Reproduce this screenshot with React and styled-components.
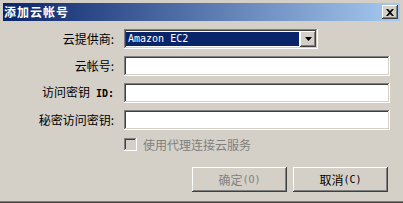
import React from "react";
import styled, { createGlobalStyle } from "styled-components";

const Global = createGlobalStyle`
  html, body { margin: 0; padding: 0; background: #d4d0c8; }
  * { box-sizing: border-box; }
`;

const raised = `
  box-shadow: inset -1px -1px #404040, inset 1px 1px #ffffff,
    inset -2px -2px #808080, inset 2px 2px #d4d0c8;
`;
const sunken = `
  box-shadow: inset -1px -1px #ffffff, inset 1px 1px #808080,
    inset -2px -2px #d4d0c8, inset 2px 2px #404040;
`;

const Window = styled.div`
  width: 403px;
  height: 203px;
  background: #d4d0c8;
  padding: 3px 3px 0 3px;
  box-shadow: inset 0 -1px #404040, inset 0 -2px #808080;
  font-family: "Noto Sans CJK SC", "Liberation Sans", sans-serif;
  font-size: 12px;
  color: #000;
`;

const TitleBar = styled.div`
  height: 18px;
  display: flex;
  align-items: center;
  justify-content: space-between;
  padding: 0 2px 0 1px;
  background: linear-gradient(to right, #0a246a, #a6caf0);
`;

const Title = styled.span`
  color: #fff;
  font-weight: bold;
  font-size: 12px;
  letter-spacing: 1px;
  line-height: 18px;
`;

const CloseButton = styled.div`
  width: 16px;
  height: 14px;
  background: #d4d0c8;
  ${raised}
  display: flex;
  align-items: center;
  justify-content: center;
`;

const Form = styled.div`
  display: grid;
  grid-template-columns: 111px 266px;
  grid-auto-rows: 20px;
  column-gap: 10px;
  row-gap: 7px;
  margin-top: 8px;
`;

const Label = styled.label`
  text-align: right;
  align-self: center;
  line-height: 14px;
  white-space: nowrap;
`;

const Mono = styled.span`
  font-family: "DejaVu Sans Mono", "Liberation Mono", monospace;
  font-size: 10px;
  font-weight: ${(p) => (p.bold ? "bold" : "normal")};
`;

const Field = styled.div`
  background: #fff;
  ${sunken}
  height: 20px;
`;

const SelectBox = styled.div`
  width: 194px;
  height: 20px;
  background: #fff;
  ${sunken}
  padding: 2px;
  display: flex;
  align-items: stretch;
`;

const Selected = styled.div`
  flex: 1;
  margin: 1px 1px 1px 0;
  background: #0a246a;
  color: #fff;
  font-family: "DejaVu Sans Mono", "Liberation Mono", monospace;
  font-size: 10px;
  line-height: 14px;
  padding-left: 2px;
`;

const DropButton = styled.div`
  width: 16px;
  background: #d4d0c8;
  ${raised}
  display: flex;
  align-items: center;
  justify-content: center;
`;

const CheckRow = styled.div`
  grid-column: 2;
  display: flex;
  align-items: center;
  gap: 6px;
  height: 15px;
  color: #808080;
`;

const CheckBox = styled.span`
  width: 13px;
  height: 13px;
  background: #d4d0c8;
  ${sunken}
`;

const Buttons = styled.div`
  display: flex;
  justify-content: flex-end;
  gap: 6px;
  padding-right: 12px;
  margin-top: 10px;
`;

const Button = styled.div`
  width: 95px;
  height: 25px;
  background: #d4d0c8;
  ${raised}
  display: flex;
  align-items: center;
  justify-content: center;
  color: ${(p) => (p.disabled ? "#808080" : "#000")};
`;

export default function App() {
  return (
    <>
      <Global />
      <Window>
        <TitleBar>
          <Title>添加云帐号</Title>
          <CloseButton>
            <svg width="8" height="7" viewBox="0 0 8 7">
              <path d="M0 0h2l2 2 2-2h2L5 3.5 8 7H6L4 5 2 7H0l3-3.5z" fill="#000" />
            </svg>
          </CloseButton>
        </TitleBar>
        <Form>
          <Label>云提供商:</Label>
          <SelectBox>
            <Selected>Amazon EC2</Selected>
            <DropButton>
              <svg width="7" height="4" viewBox="0 0 7 4">
                <path d="M0 0h7L3.5 4z" fill="#000" />
              </svg>
            </DropButton>
          </SelectBox>
          <Label>云帐号:</Label>
          <Field />
          <Label>
            访问密钥<Mono bold> ID:</Mono>
          </Label>
          <Field />
          <Label>秘密访问密钥:</Label>
          <Field />
          <CheckRow>
            <CheckBox />
            <span>使用代理连接云服务</span>
          </CheckRow>
        </Form>
        <Buttons>
          <Button disabled>
            确定<Mono>(O)</Mono>
          </Button>
          <Button>
            取消<Mono>(C)</Mono>
          </Button>
        </Buttons>
      </Window>
    </>
  );
}
